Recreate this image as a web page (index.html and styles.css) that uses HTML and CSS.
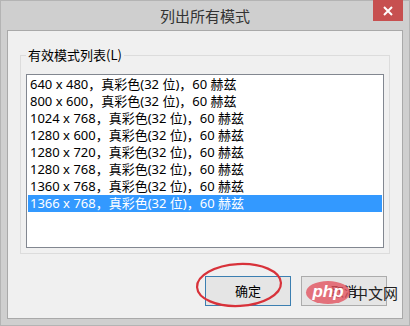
FILE: index.html
```html
<!DOCTYPE html>
<html lang="zh-CN">
<head>
    <meta charset="utf-8" />
    <title>列出所有模式</title>
    <link rel="stylesheet" href="styles.css">
</head>
<body>
    <div class="window">
        <div class="titlebar">
            <div class="title">列出所有模式</div>
            <a class="close_btn">
                <svg width="10" height="10" viewBox="0 0 10 10"><path d="M1 1 L9 9 M9 1 L1 9" stroke="#fff" stroke-width="2"/></svg>
            </a>
        </div>
        <div class="client">
            <fieldset class="group">
                <legend>有效模式列表(L)</legend>
                <ul class="mode_list">
                    <li>640 x 480，真彩色(32 位)，60 赫兹</li>
                    <li>800 x 600，真彩色(32 位)，60 赫兹</li>
                    <li>1024 x 768，真彩色(32 位)，60 赫兹</li>
                    <li>1280 x 600，真彩色(32 位)，60 赫兹</li>
                    <li>1280 x 720，真彩色(32 位)，60 赫兹</li>
                    <li>1280 x 768，真彩色(32 位)，60 赫兹</li>
                    <li>1360 x 768，真彩色(32 位)，60 赫兹</li>
                    <li class="selected">1366 x 768，真彩色(32 位)，60 赫兹</li>
                </ul>
            </fieldset>
            <div class="button_wrapper">
                <a class="btn default">确定</a>
                <a class="btn">取消</a>
                <svg class="mark_circle" width="92" height="50" viewBox="0 0 92 50">
                    <ellipse cx="46" cy="24" rx="42" ry="21" fill="none" stroke="#d8323a" stroke-width="2.2" transform="rotate(-3 46 24)"/>
                </svg>
                <div class="watermark">
                    <span class="php_logo">php</span><span class="php_text">中文网</span>
                </div>
            </div>
        </div>
    </div>
</body>
</html>
```

FILE: styles.css
```css
html, body {
    margin: 0;
    padding: 0;
    font-size: 12px;
    font-family: "Noto Sans", "Noto Sans CJK SC", sans-serif;
    overflow: hidden;
}

.window {
    width: 410px;
    height: 326px;
    box-sizing: border-box;
    background-color: #cfcfcf;
    border: 1px solid #b4b4b4;
    display: flex;
    flex-direction: column;
}

.titlebar {
    height: 29px;
    display: grid;
    grid-template-columns: 1fr auto 1fr;
    align-items: start;
}

    .titlebar .title {
        grid-column: 2;
        font-size: 15px;
        line-height: 29px;
        color: #333;
        font-family: "Noto Sans CJK SC", sans-serif;
    }

.close_btn {
    grid-column: 3;
    justify-self: end;
    margin-right: 6px;
    margin-top: -1px;
    width: 30px;
    height: 21px;
    background-color: #c75050;
    display: flex;
    align-items: center;
    justify-content: center;
}

.client {
    flex: 1;
    margin: 0 6px 6px 6px;
    border: 1px solid #a9a9a9;
    background-color: #f0f0f0;
    display: flex;
    flex-direction: column;
}

.group {
    margin: 16px 12px 0 12px;
    padding: 11px 5px 5px 5px;
    border: 1px solid #dcdcdc;
    min-inline-size: 0;
}

    .group legend {
        padding: 0 2px;
        font-family: "Noto Sans CJK SC", sans-serif;
        font-size: 13px;
        line-height: 16px;
        color: #000;
    }

.mode_list {
    margin: 0;
    padding: 1px;
    box-sizing: content-box;
    list-style: none;
    background-color: #fff;
    border: 1px solid #828790;
    height: 170px;
}

    .mode_list li {
        height: 17px;
        line-height: 17px;
        padding-left: 2px;
        font-size: 13px;
        color: #000;
        white-space: nowrap;
    }

        .mode_list li.selected {
            background-color: #3399ff;
            color: #fff;
        }

.button_wrapper {
    position: relative;
    display: flex;
    justify-content: flex-end;
    gap: 10px;
    margin-top: 22px;
    padding-right: 15px;
}

.btn {
    width: 84px;
    height: 28px;
    line-height: 28px;
    text-align: center;
    background-color: #e5e5e5;
    border: 1px solid #acacac;
    color: #000;
    font-size: 13px;
    font-family: "Noto Sans CJK SC", sans-serif;
}

    .btn.default {
        border-color: #3c7fb1;
    }

.mark_circle {
    position: absolute;
    left: 185px;
    top: -15px;
}

.watermark {
    position: absolute;
    left: 298px;
    top: 5px;
    display: flex;
    align-items: center;
}

.php_logo {
    width: 44px;
    height: 23px;
    border-radius: 50%;
    background-color: rgba(226, 84, 96, 0.8);
    color: #fff;
    font-family: "Liberation Sans", sans-serif;
    font-style: italic;
    font-weight: bold;
    font-size: 17px;
    line-height: 21px;
    text-align: center;
}

.php_text {
    margin-left: 3px;
    font-family: "Noto Sans CJK SC", sans-serif;
    font-size: 15px;
    color: #222;
}
```
